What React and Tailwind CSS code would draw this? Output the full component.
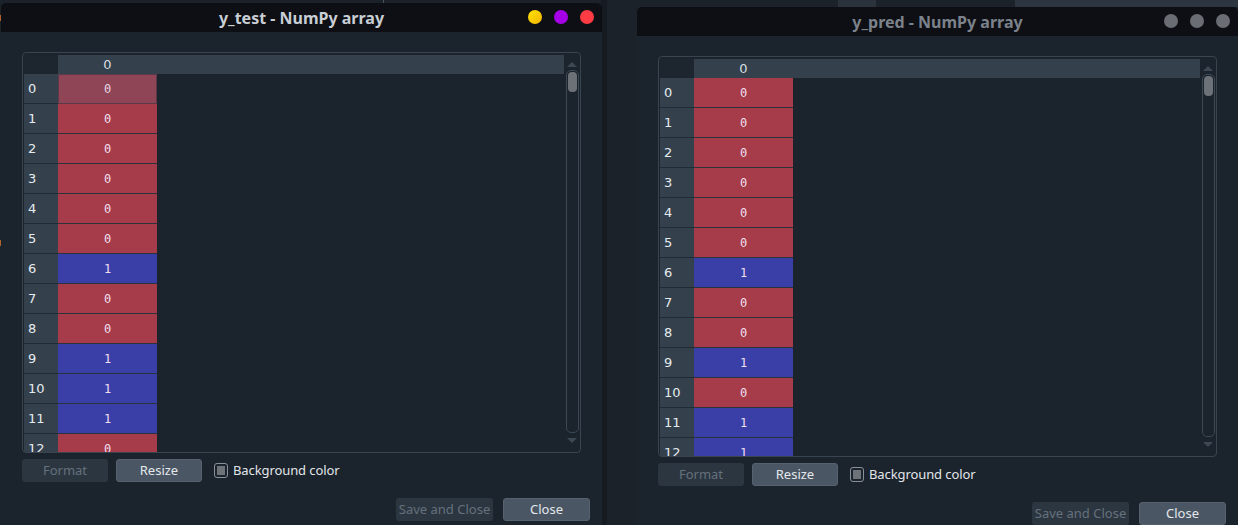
import React from "react";

const leftData = [0, 0, 0, 0, 0, 0, 1, 0, 0, 1, 1, 1, 0, 0];
const rightData = [0, 0, 0, 0, 0, 0, 1, 0, 0, 1, 0, 1, 1, 1];

const sans = { fontFamily: '"Noto Sans", "DejaVu Sans", sans-serif' };

function Dot({ className }) {
  return <span className={"block w-[14px] h-[14px] rounded-full " + className} />;
}

function Cell({ v, selected }) {
  const color = v === 1 ? "bg-[#3a3fa8]" : "bg-[#a63c4a]";
  if (selected) {
    return (
      <div className="w-[99px] h-[30px] bg-[#8f4555] border border-[#5a3a48] flex items-center justify-center text-[12px] text-[#e6d6e6] font-['DejaVu_Sans_Mono',monospace]">
        {v}
      </div>
    );
  }
  return (
    <div className={"w-[99px] h-[30px] border-b border-[#2a323c] flex items-center justify-center text-[12px] text-[#f0dff0] font-['DejaVu_Sans_Mono',monospace] " + color}>
      {v}
    </div>
  );
}

function Table({ data, selectFirst }) {
  return (
    <div className="w-[559px] h-[401px] border border-[#38444f] rounded-[4px] flex pl-[1px] pt-[2px] overflow-hidden">
      <div className="flex-1 flex flex-col overflow-hidden">
        <div className="flex h-[19px] shrink-0">
          <div className="w-[34px] bg-[#1d252e]" />
          <div className="flex-1 bg-[#34414c] flex">
            <div className="w-[99px] flex items-center justify-center text-[13px] text-[#d6dde3] font-['DejaVu_Sans',sans-serif]">0</div>
          </div>
        </div>
        {data.map((v, i) => (
          <div key={i} className="flex shrink-0 h-[30px]">
            <div className="w-[34px] h-[30px] bg-[#34414c] border-b border-[#222a33] flex items-center pl-[4px] text-[13px] text-[#e6ebef] font-['DejaVu_Sans',sans-serif]">
              {i}
            </div>
            <Cell v={v} selected={selectFirst && i === 0} />
          </div>
        ))}
      </div>
      <div className="w-[16px] shrink-0 flex flex-col items-center pt-[7px]">
        <div className="w-0 h-0 border-l-[5px] border-r-[5px] border-b-[5px] border-l-transparent border-r-transparent border-b-[#3c4853]" />
        <div className="mt-[3px] w-[13px] h-[363px] border border-[#3c4853] rounded-[5px] p-[1px] flex justify-center">
          <div className="w-[9px] h-[20px] rounded-[4px] bg-[#6c7177]" />
        </div>
        <div className="mt-[5px] w-0 h-0 border-l-[5px] border-r-[5px] border-t-[5px] border-l-transparent border-r-transparent border-t-[#3c4853]" />
      </div>
    </div>
  );
}

function Window({ title, active, data, selectFirst, className }) {
  return (
    <div className={"absolute w-[601px] h-[540px] flex flex-col rounded-t-[5px] overflow-hidden bg-[#1b232c] " + className} style={sans}>
      <div className="relative h-[29px] shrink-0 bg-[#0d0f14] flex items-center justify-center">
        <span className={"text-[16px] font-bold " + (active ? "text-[#c9ced4]" : "text-[#7c828b]")}>{title}</span>
        <div className="absolute right-[8px] top-[7px] flex gap-[12px]">
          {active ? (
            <>
              <Dot className="bg-[linear-gradient(135deg,#ffe400,#f4b400)]" />
              <Dot className="bg-[#a600e6]" />
              <Dot className="bg-[#ff3c44]" />
            </>
          ) : (
            <>
              <Dot className="bg-[#6a6d74]" />
              <Dot className="bg-[#6a6d74]" />
              <Dot className="bg-[#6a6d74]" />
            </>
          )}
        </div>
      </div>
      <div className="flex flex-col pl-[21px] pt-[20px]">
        <Table data={data} selectFirst={selectFirst} />
        <div className="flex items-center mt-[6px] h-[23px]">
          <div className="w-[86px] h-[23px] rounded-[3px] bg-[#2c3641] text-[#65717c] text-[13px] flex items-center justify-center">Format</div>
          <div className="ml-[8px] w-[86px] h-[23px] rounded-[3px] bg-[#4a5664] border border-[#566270] text-[#e4e8eb] text-[13px] flex items-center justify-center">Resize</div>
          <div className="ml-[12px] w-[14px] h-[15px] rounded-[3px] border border-[#8a9097] flex items-center justify-center">
            <div className="w-[8px] h-[9px] bg-[#6d7379]" />
          </div>
          <span className="ml-[5px] text-[13px] tracking-[-0.1px] text-[#e2e6ea]">Background color</span>
        </div>
        <div className="flex justify-end pr-[12px] mt-[16px] gap-[10px]">
          <div className="w-[97px] h-[23px] rounded-[3px] bg-[#2c3641] text-[#65717c] text-[13px] flex items-center justify-center">Save and Close</div>
          <div className="w-[87px] h-[23px] rounded-[3px] bg-[#4a5664] border border-[#566270] text-[#e4e8eb] text-[13px] flex items-center justify-center">Close</div>
        </div>
      </div>
    </div>
  );
}

export default function App() {
  return (
    <div className="relative w-[1238px] h-[525px] overflow-hidden bg-[#1b222a]">
      <div className="absolute left-[383px] top-0 w-[1px] h-[3px] bg-[#4a525c]" />
      <div className="absolute left-[1015px] top-0 w-[223px] h-[7px] bg-[#2c3540]" />
      <div className="absolute left-[838px] top-0 w-[38px] h-[7px] bg-[#2a323c]" />
      <div className="absolute left-[601px] top-0 w-[6px] h-[525px] bg-[#151b21]" />
      <div className="absolute left-0 top-[15px] w-[2px] h-[6px] bg-[#b0602a]" />
      <div className="absolute left-0 top-[240px] w-[2px] h-[6px] bg-[#b0602a]" />
      <Window title="y_test - NumPy array" active data={leftData} selectFirst className="left-[1px] top-[3px]" />
      <Window title="y_pred - NumPy array" data={rightData} className="left-[637px] top-[7px]" />
    </div>
  );
}
